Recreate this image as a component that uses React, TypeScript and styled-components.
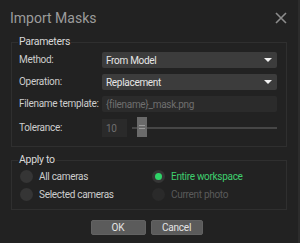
import React from "react";
import styled, { createGlobalStyle } from "styled-components";

const Global = createGlobalStyle`
  html, body { margin: 0; padding: 0; background: #222222; }
  * { box-sizing: border-box; }
`;

const Dialog = styled.div`
  width: 300px;
  height: 243px;
  background: #222222;
  border-right: 2px solid #2c2c2c;
  font-family: Roboto, "Noto Sans", sans-serif;
  font-size: 10px;
  letter-spacing: -0.3px;
  color: #cfcfcf;
  display: flex;
  flex-direction: column;
  padding: 0 11px 0 11px;
`;

const TitleBar = styled.div`
  height: 35px;
  display: flex;
  align-items: center;
  justify-content: space-between;
  margin-left: -1px;
`;

const Title = styled.div`
  font-size: 14px;
  letter-spacing: 0;
  color: #9c9c9c;
`;

const Close = styled.button`
  background: none;
  border: none;
  padding: 0;
  width: 14px;
  height: 14px;
  display: flex;
  margin-right: -1px;
`;

const Group = styled.fieldset<{ $h: number }>`
  margin: 0;
  border: 1px solid #2f2f2f;
  padding: 0;
  height: ${(p) => p.$h}px;
  width: 276px;
`;

const Legend = styled.legend`
  margin-left: 6px;
  padding: 0 1px;
  font-size: 10.5px;
  line-height: 14px;
  color: #d8d8d8;
`;

const Rows = styled.div`
  display: grid;
  grid-template-columns: 83px 175px;
  row-gap: 6px;
  padding: 3px 0 0 7px;
  align-items: center;
`;

const Label = styled.div`
  line-height: 16px;
  color: #cdcdcd;
  white-space: nowrap;
`;

const Combo = styled.div`
  height: 16px;
  background: #3c3c3c;
  border-radius: 2px;
  display: flex;
  align-items: center;
  justify-content: space-between;
  padding: 0 5px 0 4px;
  color: #e6e6e6;
`;

const Arrow = styled.span`
  width: 0;
  height: 0;
  border-left: 4px solid transparent;
  border-right: 4px solid transparent;
  border-top: 4px solid #f2f2f2;
`;

const LineEdit = styled.div`
  height: 16px;
  background: #2b2b2b;
  border-radius: 2px;
  display: flex;
  align-items: center;
  padding: 0 4px;
  color: #6f6f6f;
`;

const TolRow = styled.div`
  display: flex;
  align-items: center;
  height: 20px;
`;

const Spin = styled.div`
  width: 25px;
  height: 18px;
  background: #2a2a2a;
  color: #6f6f6f;
  display: flex;
  align-items: center;
  padding-left: 4px;
`;

const Slider = styled.div`
  position: relative;
  flex: 1;
  height: 2px;
  margin-left: 5px;
  background: #464646;
`;

const Handle = styled.div`
  position: absolute;
  left: 5px;
  top: -10px;
  width: 10px;
  height: 20px;
  background: #6a6a6a;
  display: flex;
  flex-direction: column;
  align-items: center;
  justify-content: center;
  gap: 2px;
  &::before, &::after {
    content: "";
    width: 6px;
    height: 1px;
    background: #9a9a9a;
  }
`;

const Radios = styled.div`
  display: grid;
  grid-template-columns: 132px 1fr;
  row-gap: 5px;
  padding: 3px 0 0 8px;
`;

const RadioItem = styled.div<{ $tone: "normal" | "checked" | "disabled" }>`
  display: flex;
  align-items: center;
  gap: 6px;
  height: 13px;
  color: ${(p) =>
    p.$tone === "checked" ? "#3fcf6e" : p.$tone === "disabled" ? "#5a5a5a" : "#cdcdcd"};
`;

const Dot = styled.span<{ $tone: "normal" | "checked" | "disabled" }>`
  width: 13px;
  height: 13px;
  border-radius: 50%;
  background: ${(p) => (p.$tone === "disabled" ? "#2a2a2a" : "#353535")};
  display: flex;
  align-items: center;
  justify-content: center;
  &::after {
    content: "";
    width: 7px;
    height: 7px;
    border-radius: 50%;
    background: ${(p) => (p.$tone === "checked" ? "#2fd468" : "transparent")};
  }
`;

const Buttons = styled.div`
  display: flex;
  justify-content: center;
  gap: 5px;
  margin-top: 10px;
  padding-right: 5px;
`;

const Button = styled.button<{ $w: number }>`
  width: ${(p) => p.$w}px;
  height: 15px;
  background: #5b5b5b;
  border: 1px solid #626262;
  border-radius: 2px;
  color: #e4e4e4;
  font-family: inherit;
  font-size: 10px;
  letter-spacing: -0.2px;
  padding: 0;
  line-height: 13px;
`;

type Tone = "normal" | "checked" | "disabled";
const Radio = ({ tone, children }: { tone: Tone; children: React.ReactNode }) => (
  <RadioItem $tone={tone}>
    <Dot $tone={tone} />
    {children}
  </RadioItem>
);

export default function App() {
  return (
    <>
      <Global />
      <Dialog>
        <TitleBar>
          <Title>Import Masks</Title>
          <Close aria-label="close">
            <svg width="14" height="14" viewBox="0 0 14 14">
              <path d="M2 2L12 12M12 2L2 12" stroke="#8c8c8c" strokeWidth="1.6" />
            </svg>
          </Close>
        </TitleBar>
        <Group $h={112}>
          <Legend>Parameters</Legend>
          <Rows>
            <Label>Method:</Label>
            <Combo>
              From Model <Arrow />
            </Combo>
            <Label>Operation:</Label>
            <Combo>
              Replacement <Arrow />
            </Combo>
            <Label>Filename template:</Label>
            <LineEdit>{"{filename}_mask.png"}</LineEdit>
            <Label>Tolerance:</Label>
            <TolRow>
              <Spin>10</Spin>
              <Slider>
                <Handle />
              </Slider>
            </TolRow>
          </Rows>
        </Group>
        <Group $h={57} style={{ marginTop: 6 }}>
          <Legend>Apply to</Legend>
          <Radios>
            <Radio tone="normal">All cameras</Radio>
            <Radio tone="checked">Entire workspace</Radio>
            <Radio tone="normal">Selected cameras</Radio>
            <Radio tone="disabled">Current photo</Radio>
          </Radios>
        </Group>
        <Buttons>
          <Button $w={55}>OK</Button>
          <Button $w={52}>Cancel</Button>
        </Buttons>
      </Dialog>
    </>
  );
}
